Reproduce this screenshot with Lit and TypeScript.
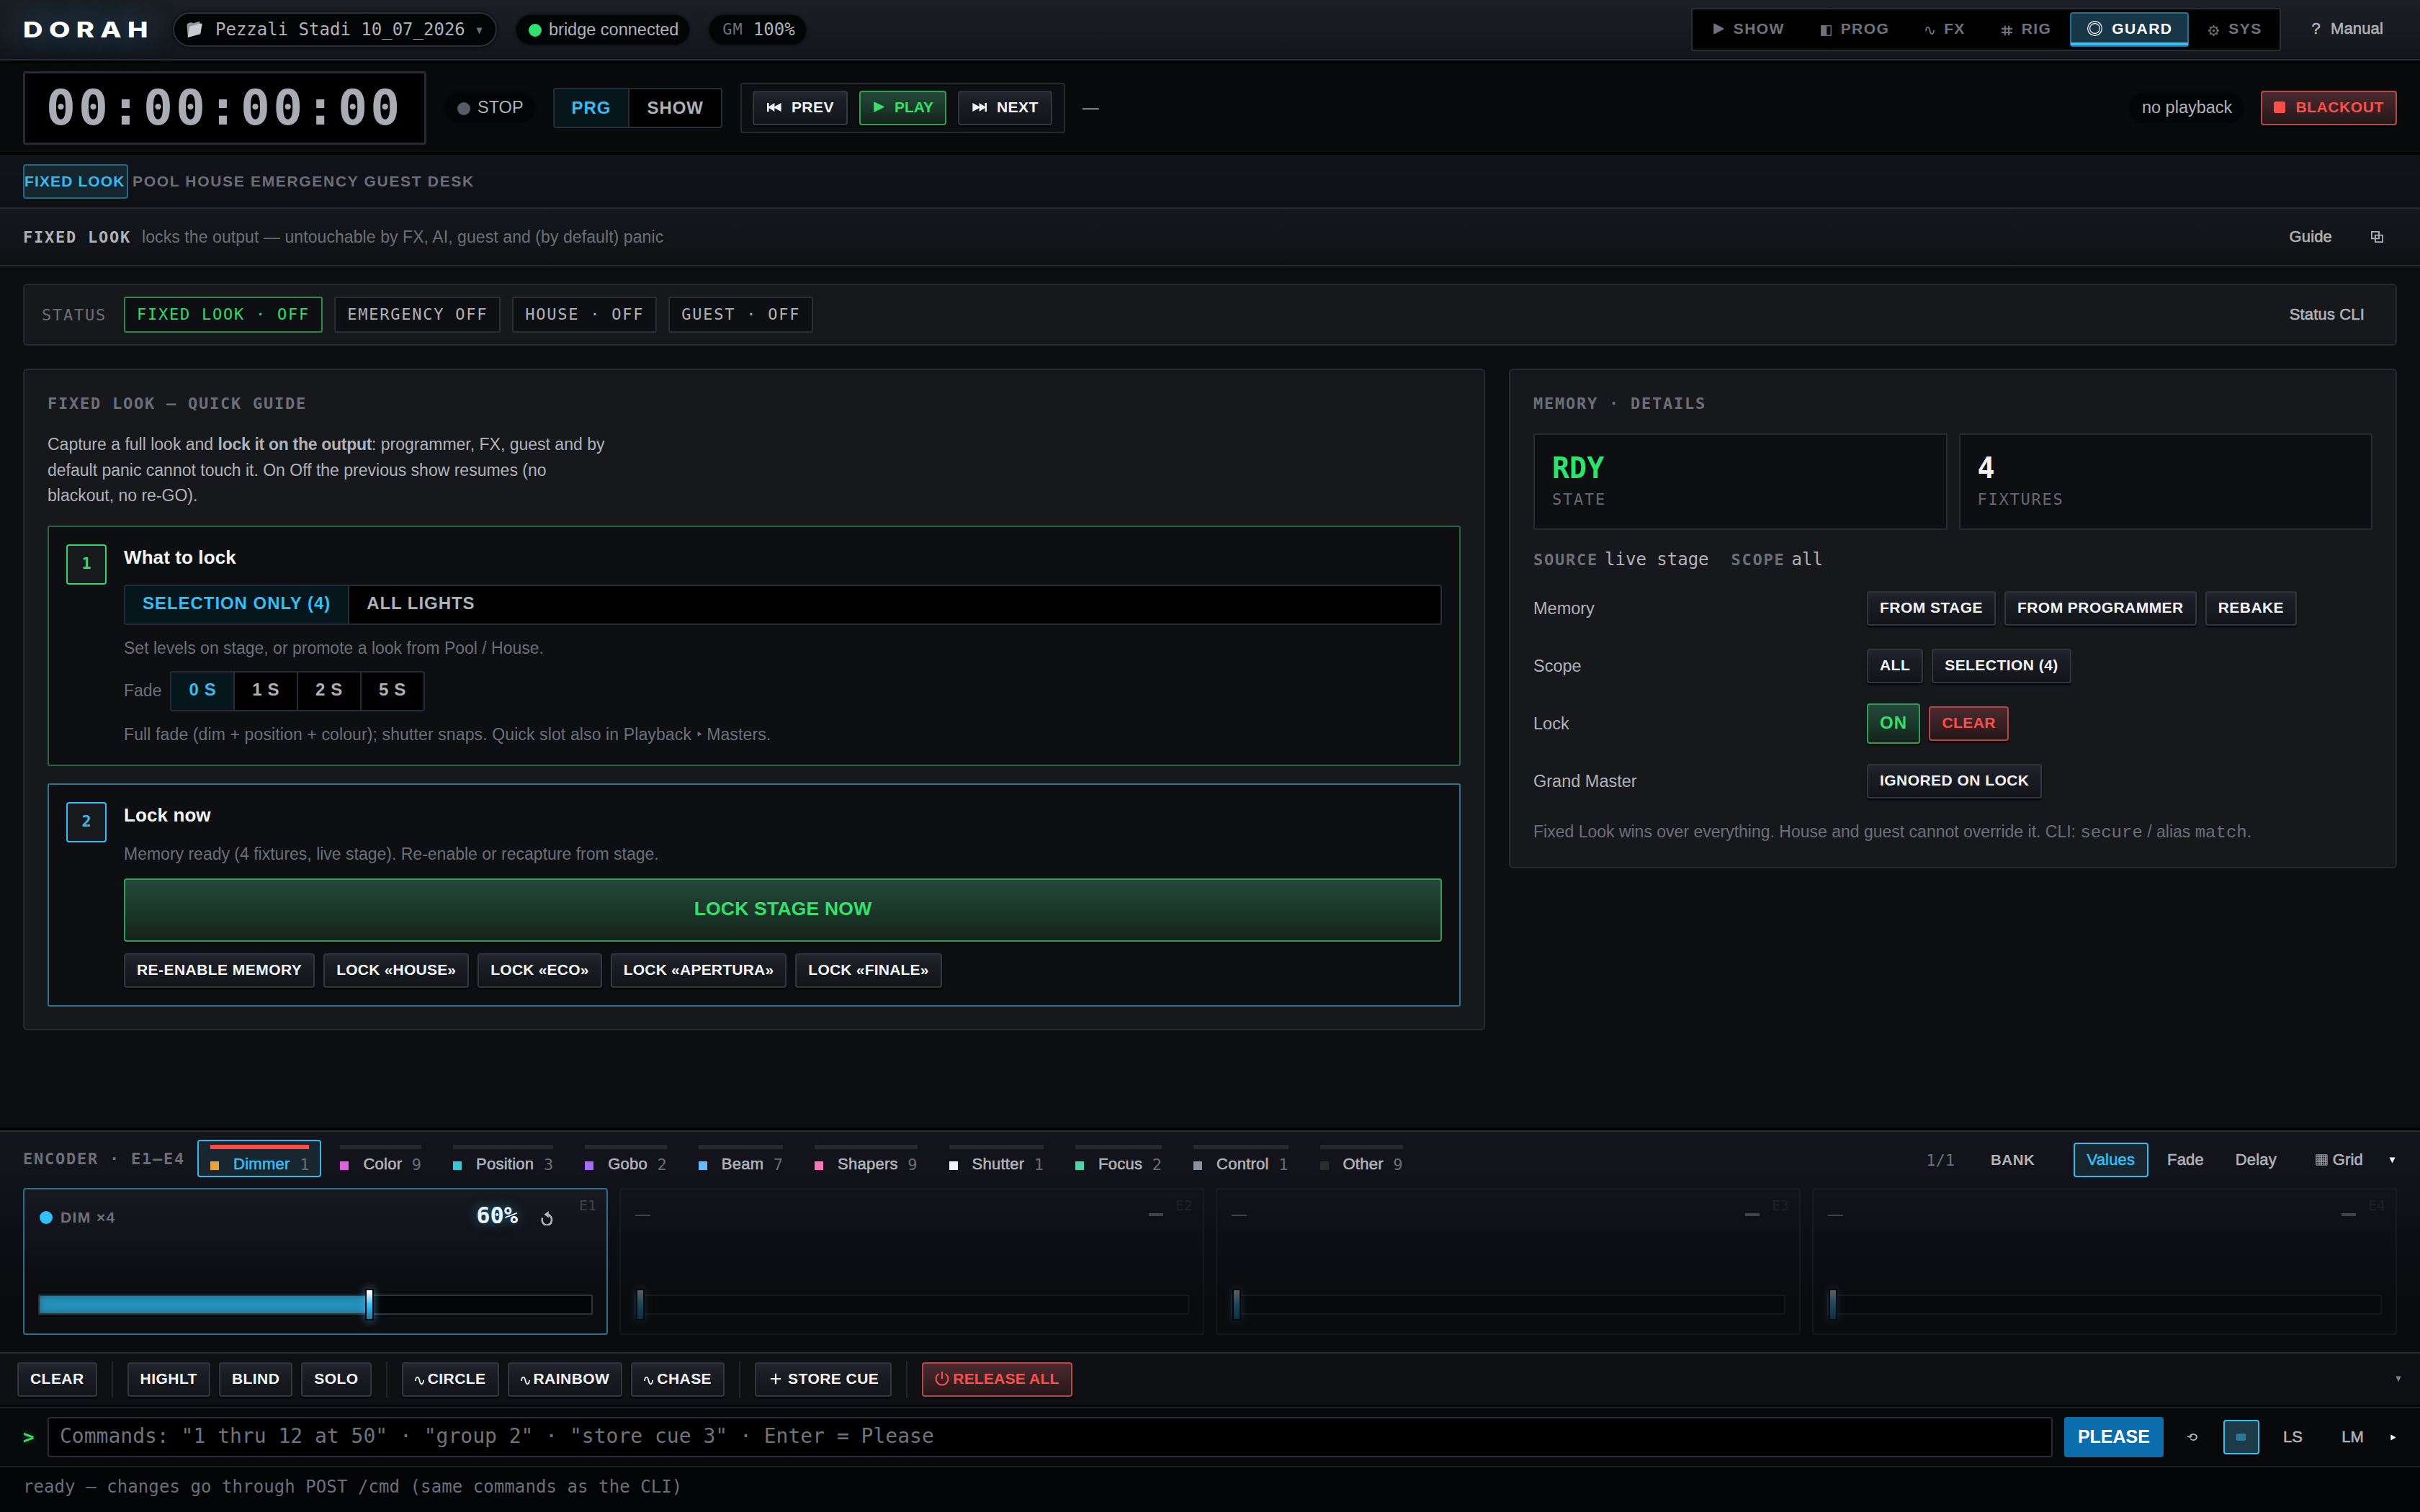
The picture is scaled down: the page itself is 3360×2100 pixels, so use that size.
import { LitElement, html, css, svg, TemplateResult } from "lit";
import { customElement, property } from "lit/decorators.js";
import { classMap } from "lit/directives/class-map.js";

// icon bodies, each drawn on a 20x20 grid
const ICONS: Record<string, TemplateResult> = {
  folder: svg`<path fill="#8f9499" d="M2 5 Q2 3 4 2.6 L7 1.6 L9 2.8 L15 .8 Q16.5 .6 16.5 2 L16.5 15 L3 19 Z"/><path fill="#c9cdd1" d="M5 6.4 L17.4 3 Q19 2.6 18.8 4.2 L17 15.2 L3 19.2 Z"/>`,
  play: svg`<path fill="currentColor" d="M1.5 2 Q1.5 .4 3 1 L18.4 8.8 Q20 10 18.4 11.2 L3 19 Q1.5 19.6 1.5 18 Z"/>`,
  prev: svg`<path fill="currentColor" d="M0 1.5 H2.6 V8.6 L10.4 1.5 V8.6 L19.6 1.5 V18.5 L10.4 11.4 V18.5 L2.6 11.4 V18.5 H0 Z"/>`,
  next: svg`<path fill="currentColor" d="M20 1.5 H17.4 V8.6 L9.6 1.5 V8.6 L.4 1.5 V18.5 L9.6 11.4 V18.5 L17.4 11.4 V18.5 H20 Z"/>`,
  stop: svg`<rect fill="currentColor" x="0" y="0" width="20" height="20" rx="3.5"/>`,
  half: svg`<rect x="1" y="1" width="18" height="18" fill="none" stroke="currentColor" stroke-width="1.8"/><rect fill="currentColor" x="1" y="1" width="10" height="18"/>`,
  wave: svg`<path fill="none" stroke="currentColor" stroke-width="2.8" d="M1.5 11 C2 1 8 0 10 10 C12 20 18 19 18.5 9"/>`,
  hash: svg`<path fill="none" stroke="currentColor" stroke-width="2.8" d="M6.5 1 V19 M13.5 1 V19 M0 6.5 H20 M0 13.5 H20"/>`,
  ring: svg`<circle cx="10" cy="10" r="9.4" fill="none" stroke="currentColor" stroke-width="1.1"/><circle cx="10" cy="10" r="6.6" fill="none" stroke="currentColor" stroke-width="1.1"/>`,
  gear: svg`<circle cx="10" cy="10" r="6.8" fill="none" stroke="currentColor" stroke-width="2.2"/><circle cx="10" cy="10" r="2.2" fill="currentColor"/><path stroke="currentColor" stroke-width="2.4" d="M10 0 V3 M10 17 V20 M0 10 H3 M17 10 H20 M3 3 L5 5 M15 15 L17 17 M17 3 L15 5 M5 15 L3 17"/>`,
  copy: svg`<path fill="none" stroke="currentColor" stroke-width="2.2" d="M1 1 H13 V13 H1 Z M7 7 H19 V19 H7 Z"/>`,
  undo: svg`<path fill="none" stroke="currentColor" stroke-width="2.8" d="M2.4 9.5 A7.4 7.4 0 1 0 10.5 5"/><path fill="currentColor" d="M12 0 V9.6 L5 4.8 Z"/>`,
  power: svg`<path fill="none" stroke="currentColor" stroke-width="2" d="M10 0 V10 M5.6 3 A8.4 8.4 0 1 0 14.4 3"/>`,
  plus: svg`<path fill="none" stroke="currentColor" stroke-width="2.8" d="M10 1 V19 M1 10 H19"/>`,
  grid: svg`<path fill="none" stroke="currentColor" stroke-width="1.1" d="M1 1 H19 V19 H1 Z M4 1 V19 M7 1 V19 M10 1 V19 M13 1 V19 M16 1 V19 M1 4 H19 M1 7 H19 M1 10 H19 M1 13 H19 M1 16 H19"/>`,
  loop: svg`<path fill="none" stroke="currentColor" stroke-width="2.8" d="M6 13.5 A6.8 6.8 0 1 0 6.6 5.6 L5.6 9 M0 8 L5.6 10.4 L9 6"/>`,
  keys: svg`<rect x="0.6" y="3" width="18.8" height="14" rx="2" fill="#226f8d" stroke="currentColor" stroke-width="1.4"/><path stroke="currentColor" stroke-width="1.4" stroke-dasharray="1.6 1" d="M2.5 6.5 H17.5 M2.5 10 H17.5 M2.5 13.5 H17.5"/>`,
  down: svg`<path fill="currentColor" d="M1 1 H19 L10 19 Z"/>`,
  right: svg`<path fill="currentColor" d="M1 1 V19 L19 10 Z"/>`,
};

const icon = (name: string, w: number, h = w) =>
  html`<svg class="i ${name}" width=${w} height=${h} viewBox="0 0 20 20" preserveAspectRatio="none">${ICONS[name]}</svg>`;

const shared = css`
  * {
    box-sizing: border-box;
  }
  .mono {
    font-family: "DejaVu Sans Mono", monospace;
  }
  .i {
    display: block;
    flex: none;
  }
  .grow {
    flex: 1;
  }
`;

@customElement("encoder-card")
export class EncoderCard extends LitElement {
  @property() label = "";
  @property() value = "";
  @property() slotName = "";
  @property({ type: Number }) level = 0;
  @property({ type: Boolean, reflect: true }) active = false;

  static styles = [
    shared,
    css`
      :host {
        display: block;
        flex: 1;
      }
      .card {
        position: relative;
        height: 204px;
        border: 2px solid #2f3138;
        border-radius: 4px;
        background: linear-gradient(#161a20, #11121a 35%, #0c0d10 70%);
        padding: 24px 20px 26px;
        display: flex;
        flex-direction: column;
        justify-content: space-between;
        opacity: 0.33;
      }
      :host([active]) .card {
        opacity: 1;
        border-color: #28708c;
      }
      .head {
        display: flex;
        align-items: center;
        height: 24px;
        padding-right: 35px;
        color: #6e717a;
        font: bold 21px "Liberation Sans", sans-serif;
        letter-spacing: 1.4px;
      }
      :host([active]) .head {
        padding-right: 52px;
      }
      .dot {
        width: 18px;
        height: 18px;
        border-radius: 50%;
        background: #30c0fa;
        margin: 6px 11px 0 1px;
      }
      .label {
        padding-top: 6px;
      }
      .value {
        color: #eaf6ff;
        font: bold 32px "DejaVu Sans Mono", monospace;
        letter-spacing: 0;
        text-shadow: 0 0 16px rgba(56, 192, 248, 0.5);
      }
      .head .i {
        color: #b3b5bb;
        margin: 7px 1px 0 32px;
      }
      .dash,
      .dashv {
        width: 21px;
        height: 2px;
        background: #a8abb2;
      }
      .dashv {
        width: 20px;
        height: 4px;
        margin-top: -2px;
      }
      .slot {
        position: absolute;
        top: 10px;
        right: 14px;
        color: #40434b;
        font-size: 20px;
      }
      .track {
        position: relative;
        height: 28px;
        margin: 0 -1px;
        border: 2px solid #2f3136;
        background: #040506;
      }
      .fill {
        height: 100%;
        background: #2690b8;
        box-shadow: inset 0 0 8px #146080;
      }
      .thumb {
        position: absolute;
        top: -10px;
        width: 12px;
        height: 44px;
        border: 2px solid #020406;
        background: linear-gradient(#fff 5%, #38c0f8 50%, #1b7ba4);
        box-shadow: 0 0 12px rgba(56, 192, 248, 0.6);
      }
    `,
  ];

  render() {
    return html`
      <div class="card">
        <div class="head">
          ${this.active
            ? html`<span class="dot"></span><span class="label">${this.label}</span>`
            : html`<span class="dash"></span>`}
          <span class="grow"></span>
          ${this.active
            ? html`<span class="value">${this.value}</span>${icon("undo", 18, 20)}`
            : html`<span class="dashv"></span>`}
        </div>
        <span class="slot mono">${this.slotName}</span>
        <div class="track">
          <div class="fill" style="width:${this.level}%"></div>
          <div class="thumb" style="left:calc((100% - 12px) * ${this.level / 100})"></div>
        </div>
      </div>
    `;
  }
}

@customElement("app-root")
export class AppRoot extends LitElement {
  nav = [
    { icon: "play", w: 16, label: "SHOW" },
    { icon: "half", w: 15, label: "PROG" },
    { icon: "wave", w: 13, label: "FX" },
    { icon: "hash", w: 15, label: "RIG" },
    { icon: "ring", w: 21, label: "GUARD" },
    { icon: "gear", w: 15, label: "SYS" },
  ];

  families = [
    { label: "Dimmer", count: 1, color: "#eaa23c" },
    { label: "Color", count: 9, color: "#df62dd" },
    { label: "Position", count: 3, color: "#38c6d6" },
    { label: "Gobo", count: 2, color: "#a26ef8" },
    { label: "Beam", count: 7, color: "#6cb8fb" },
    { label: "Shapers", count: 9, color: "#fb76b8" },
    { label: "Shutter", count: 1, color: "#f2f2f5" },
    { label: "Focus", count: 2, color: "#4bd6a8" },
    { label: "Control", count: 1, color: "#8b919d" },
    { label: "Other", count: 9, color: "#2b2c30" },
  ];

  static styles = [
    shared,
    css`
      :host {
        display: flex;
        flex-direction: column;
        width: 3360px;
        height: 2100px;
        overflow: hidden;
        background: #0c0e12;
        color: #b0b2b9;
        font-family: "Liberation Sans", Arial, sans-serif;
        font-size: 23px;
        white-space: nowrap;
      }
      .row {
        display: flex;
        align-items: center;
      }
      .dim {
        color: #6c6f79;
      }
      .top {
        height: 84px;
        flex: none;
        padding: 0 32px;
        border-bottom: 2px solid #292b31;
        background: linear-gradient(#1b1e23, #191c24 35%, #14151b);
      }
      .brand {
        width: 177px;
        margin: 0 31px 0 0;
        color: #fff;
        font: 800 30px Inter, sans-serif;
        letter-spacing: 6.6px;
        transform: scaleX(1.27);
        transform-origin: left;
        text-shadow: 0 0 36px rgba(56, 192, 248, 0.5);
      }
      .pill {
        display: flex;
        align-items: center;
        height: 41px;
        border-radius: 21px;
        background: #030405;
        padding: 0 15px 0 17px;
        font-size: 23.5px;
        box-shadow: 0 0 4px #030405;
      }
      .file {
        width: 450px;
        height: 48px;
        border: 2px solid #2d3037;
        border-radius: 24px;
        margin-right: 27px;
        padding: 0 15px;
        font-size: 24px;
      }
      .file .folder {
        margin-right: 17px;
      }
      .file .down {
        margin: 4px 0 0 15px;
        color: #6d7078;
      }
      .dot {
        width: 18px;
        height: 18px;
        border-radius: 50%;
        margin: 2px 10px 0 0;
        background: #565b68;
      }
      .dot.on {
        background: #2fe26c;
      }
      .gm {
        margin-left: 28px;
        padding: 0 15px 0 18px;
        font-size: 24px;
      }
      .gm .dim {
        font-size: 22px;
        margin: -2px 14px 0 0;
        letter-spacing: 1px;
      }
      .nav {
        gap: 3px;
        height: 60px;
        padding: 0 1px 0 4px;
        border: 2px solid #2b2d35;
        border-radius: 4px;
        background: #020203;
        margin-right: 43px;
      }
      .nav .item {
        position: relative;
        display: flex;
        align-items: center;
        gap: 13px;
        height: 48px;
        padding: 0 21px 3px 22px;
        border: 2px solid transparent;
        border-radius: 4px;
        color: #6f727d;
        font-weight: bold;
        font-size: 21px;
        letter-spacing: 1.4px;
      }
      .nav .half,
      .nav .wave,
      .nav .hash,
      .nav .gear {
        margin-top: 5px;
      }
      .nav .item.on {
        color: #fff;
        background: #173648;
        border-color: #267394;
      }
      .nav .item.on::after {
        content: "";
        position: absolute;
        left: -1px;
        right: -1px;
        bottom: 0;
        height: 4px;
        background: #35c3ff;
      }
      .med {
        font-size: 22px;
        letter-spacing: 0.15px;
        -webkit-text-stroke: 0.6px currentColor;
      }
      .manual {
        padding-right: 19px;
        gap: 14px;
        margin-top: -3px;
      }

      .transport {
        height: 131px;
        flex: none;
        padding: 0 32px;
        border-top: 4px solid #030304;
        border-bottom: 4px solid #020203;
        background: #090a0c;
      }
      .clock {
        width: 560px;
        height: 102px;
        border: 3px solid #292b33;
        border-radius: 4px;
        background: #000;
        color: #a9abb5;
        font: bold 68px/96px "DejaVu Sans Mono", monospace;
        letter-spacing: 4.08px;
        padding-left: 29px;
        margin-right: 26px;
      }
      .seg {
        display: inline-flex;
        height: 56px;
        border: 2px solid #2a2c33;
        border-radius: 4px;
        background: #020203;
        font-weight: bold;
        font-size: 24px;
        letter-spacing: 0.6px;
        line-height: 48px;
      }
      .seg > span {
        padding: 0 24px;
        border-right: 2px solid #2a2c33;
      }
      .seg > span:last-child {
        border-right: 0;
      }
      .seg .on {
        color: #35bdf5;
        background: #06161d;
      }
      .transport .seg {
        margin: 0 25px 0 26px;
        line-height: 51px;
        letter-spacing: 0.95px;
      }
      .btns {
        display: flex;
        align-items: center;
        gap: 12px;
      }
      .group {
        gap: 16px;
        height: 70px;
        padding: 0 16px 0 15px;
        border: 2px solid #25282e;
        border-radius: 4px;
        background: #0c0e11;
      }
      .btn {
        display: flex;
        align-items: center;
        justify-content: center;
        height: 48px;
        padding: 0 16px 2px;
        border: 2px solid #34373f;
        border-top-color: #30333b;
        border-radius: 4px;
        background: linear-gradient(#23262e, #1a1d24 30%, #121418);
        box-shadow: 0 2px 2px #020203;
        color: #f2f3f5;
        font-weight: bold;
        font-size: 21px;
        letter-spacing: 0.45px;
      }
      .btn .i {
        margin-right: 14px;
      }
      .group .btn {
        padding: 0 17px 2px 18px;
      }
      .btn.go {
        color: #35e06c;
        border-color: #2f9f58;
        background: linear-gradient(#25483a, #1c3a2c 45%, #14231b);
      }
      .group .go {
        padding: 0 16px 2px 17px;
        letter-spacing: 0;
      }
      .btn.stop {
        color: #fd4f49;
        border-color: #b8474a;
        background: linear-gradient(#4b292d, #3a2226 45%, #251618);
      }
      .transport .btn.stop {
        letter-spacing: 0.6px;
      }

      .tabs {
        height: 75px;
        flex: none;
        gap: 6px;
        padding: 0 32px;
        border-bottom: 2px solid #25282c;
        background: linear-gradient(#12121b, #11121a 35%, #0f1013);
        font-weight: bold;
        font-size: 21px;
        letter-spacing: 1.68px;
        color: #6c6f79;
      }
      .tabs .on {
        width: 146px;
        height: 48px;
        line-height: 43px;
        border: 2px solid #226a86;
        border-radius: 4px;
        background: #16262f;
        color: #38b9f0;
        letter-spacing: 1.12px;
      }
      .pagehead {
        height: 80px;
        flex: none;
        padding: 0 32px;
        border-bottom: 2px solid #2a2c30;
        background: linear-gradient(#15191d, #0f1013);
      }
      .pagehead b {
        font-size: 22px;
        letter-spacing: 1.76px;
        margin-right: 15px;
      }
      .pagehead .dim {
        letter-spacing: 0.08px;
      }
      .pagehead .copy {
        margin: 0 19px 0 54px;
      }

      .main {
        flex: 1;
        padding: 24px 32px 0;
      }
      .panel {
        border: 2px solid #282a2f;
        border-radius: 6px;
        background: #17181c;
      }
      .status {
        height: 86px;
        padding: 0 43px 0 24px;
        font-size: 22px;
        letter-spacing: 1.76px;
      }
      .status .btns {
        gap: 16px;
        margin-left: 24px;
      }
      .status .med {
        font-family: "Liberation Sans", sans-serif;
        letter-spacing: 0.15px;
      }
      .chip {
        height: 50px;
        line-height: 45px;
        padding: 0 16px;
        border: 2px solid #2b2d33;
        border-radius: 3px;
        background: #0d0f12;
      }
      .chip.on {
        color: #2fdc68;
        border-color: #278c4c;
      }
      .cols {
        display: flex;
        align-items: flex-start;
        gap: 33px;
        margin-top: 32px;
      }
      h2 {
        margin: 0;
        font: bold 22px/26px "DejaVu Sans Mono", monospace;
        letter-spacing: 1.76px;
        color: #6c6f79;
      }
      .guide {
        width: 2030px;
        height: 919px;
        padding: 34px 32px 0;
      }
      .guide > p {
        width: 790px;
        margin: 26px 0 23px;
        line-height: 35.6px;
        white-space: normal;
      }
      .guide > p b {
        letter-spacing: -0.3px;
      }
      .step {
        display: flex;
        gap: 24px;
        padding: 24px;
        border: 2px solid #26683f;
        border-radius: 3px;
        background: #0d0f12;
        height: 334px;
        margin-bottom: 24px;
      }
      .step.two {
        border-color: #2a7594;
        height: 310px;
      }
      .badge {
        flex: none;
        width: 56px;
        height: 56px;
        border: 2px solid #36d46c;
        border-radius: 4px;
        background: #17191d;
        color: #33d96a;
        font: bold 22px/50px "DejaVu Sans Mono", monospace;
        text-align: center;
      }
      .two .badge {
        color: #38bdf3;
        border-color: #38bdf3;
      }
      .body {
        flex: 1;
      }
      .body h3 {
        margin: 3px 0 23px;
        font-size: 26px;
        line-height: 30px;
        letter-spacing: 0.1px;
        color: #f4f5f7;
      }
      .body .seg {
        display: flex;
        letter-spacing: 0.95px;
      }
      .body p {
        margin: 0;
        line-height: 32px;
        color: #6c6f79;
      }
      .body p.levels {
        padding: 16px 0;
      }
      .body p.fade {
        padding-top: 16px;
        letter-spacing: 0.12px;
      }
      .body .row .seg {
        display: inline-flex;
        margin-left: 12px;
        color: #b0b2b9;
        letter-spacing: 0.6px;
      }
      .btn.big {
        height: 88px;
        font-size: 26.5px;
        margin: 18px 0 16px;
        letter-spacing: 0.2px;
      }
      .btn.look {
        letter-spacing: 0.22px;
      }
      .memory {
        flex: 1;
        height: 694px;
        padding: 34px 32px 0;
      }
      .stats {
        display: flex;
        gap: 16px;
        margin: 28px 0 23px;
      }
      .stat {
        flex: 1;
        height: 134px;
        padding: 21px 24px;
        border: 2px solid #292b30;
        border-radius: 2px;
        background: #0d0f12;
        font-size: 22px;
        line-height: 26px;
        letter-spacing: 1.76px;
        color: #666973;
      }
      .stat b {
        display: block;
        font-size: 40px;
        line-height: 50px;
        letter-spacing: 0;
        color: #f2f3f5;
        margin-bottom: 6px;
      }
      .stat b.ok {
        color: #2fe26c;
      }
      .source {
        height: 36px;
        font-size: 24px;
        margin-bottom: 22px;
      }
      .source b {
        font-size: 22px;
        letter-spacing: 1.76px;
        margin-right: 9px;
        color: #6c6f79;
      }
      .source span {
        margin-right: 31px;
      }
      .opt {
        display: grid;
        grid-template-columns: 463px 1fr;
        align-items: center;
        height: 56px;
        margin-bottom: 24px;
        font-size: 23.5px;
      }
      .btn.tall {
        height: 56px;
        font-size: 24px;
        letter-spacing: 1.2px;
      }
      .memory p {
        margin: 0;
        line-height: 36px;
        color: #6c6f79;
      }
      .memory code {
        font-family: "Liberation Mono", monospace;
        font-size: 24px;
      }

      .encoders {
        height: 314px;
        flex: none;
        border-top: 4px solid #000;
        border-bottom: 2px solid #26282d;
        background: #0a0b0e;
      }
      .enc {
        height: 308px;
        border-top: 2px solid #2b2c35;
        background: linear-gradient(#14151b, #12121b 20%, #0a0b0e 75%);
        padding: 0 32px;
      }
      .enchead {
        height: 78px;
      }
      .enchead h2 {
        margin: -2px 17px 0 0;
      }
      .fam {
        display: flex;
        flex-direction: column;
        justify-content: center;
        gap: 8px;
        height: 52px;
        margin: -4px 8px 0 0;
        padding: 2px 16px 0;
        border: 2px solid transparent;
        border-radius: 4px;
      }
      .fam .bar {
        height: 6px;
        background: #28292e;
      }
      .fam .row {
        height: 26px;
      }
      .fam .med {
        letter-spacing: 0.26px;
      }
      .fam i {
        width: 12px;
        height: 12px;
        margin: 3px 20px 0 0;
      }
      .fam .count {
        font-size: 22px;
        margin-left: 13.5px;
        color: #6a6d77;
      }
      .fam.on {
        border-color: #34b8ee;
        background: #18272f;
        color: #38bdf3;
        padding: 2px 15px 0 16px;
      }
      .fam.on .bar {
        background: #fd4b45;
      }
      .enchead .page {
        font-size: 22px;
        margin-right: 50px;
      }
      .enchead b {
        font-size: 20.5px;
        letter-spacing: 0.6px;
        margin-right: 53px;
      }
      .mode {
        display: flex;
        align-items: center;
        height: 48px;
        padding: 0 16px;
        border: 2px solid transparent;
        border-radius: 4px;
        margin-right: 8px;
      }
      .mode.on {
        color: #38bdf3;
        border-color: #34b8ee;
        background: #18272f;
        padding: 0 17px;
      }
      .mode .i {
        margin: 0 7px 0 10px;
      }
      .enchead > .down {
        margin: 0 2px 0 10px;
        color: #fff;
      }
      .cards {
        display: flex;
        gap: 16px;
      }

      .deck {
        height: 74px;
        flex: none;
        padding: 0 26px 0 24px;
        border-bottom: 3px solid #040506;
        background: #0e1013;
        color: #80838b;
      }
      .deck .btn .i {
        margin-right: 5px;
      }
      .deck .btn .wave {
        margin-top: 6px;
      }
      .deck .btn .plus {
        margin: 0 9px 0 3px;
      }
      .deck .btn.stop {
        letter-spacing: 0.2px;
      }
      .sep {
        width: 2px;
        height: 50px;
        margin: 0 8px;
        background: #24262b;
      }
      .cmd {
        height: 84px;
        flex: none;
        padding: 0 32px;
        border-top: 2px solid #1e2024;
        border-bottom: 2px solid #1e2024;
        background: #08090b;
      }
      .prompt {
        width: 34px;
        color: #35da6a;
        font-size: 26px;
        font-weight: bold;
        text-shadow: 0 0 8px rgba(47, 226, 108, 0.4);
      }
      .input {
        flex: 1;
        height: 56px;
        border: 2px solid #2a2c33;
        border-radius: 4px;
        background: #000;
        color: #70737e;
        font-size: 28px;
        line-height: 50px;
        padding-left: 15px;
      }
      .please {
        width: 138px;
        height: 56px;
        margin: 0 33px 0 16px;
        border-radius: 4px;
        background: #0b6dab;
        color: #fff;
        font-size: 25px;
        font-weight: bold;
        line-height: 54px;
        text-align: center;
      }
      .sq {
        display: flex;
        align-items: center;
        justify-content: center;
        width: 50px;
        height: 48px;
        margin: 0 33px 0 36px;
        border: 2px solid #38bdf3;
        border-radius: 4px;
        background: #1d3a48;
        color: #2f9bc4;
      }
      .ls {
        margin-right: 54px;
      }
      .cmd > .right {
        margin: 0 1px 0 37px;
        color: #fff;
      }
      .foot {
        height: 62px;
        flex: none;
        padding: 0 32px;
        background: #030405;
        color: #6c6f79;
        font-size: 24px;
        letter-spacing: 0.08px;
        line-height: 55px;
      }
    `,
  ];

  button(label: string, cls = "", glyph: unknown = "") {
    return html`<div class="btn ${cls}">${glyph}${label}</div>`;
  }

  renderTop() {
    return html`
      <header class="top row">
        <div class="brand">DORAH</div>
        <div class="pill file mono">${icon("folder", 25, 24)}Pezzali Stadi 10_07_2026${icon("down", 9, 10)}</div>
        <div class="pill"><span class="dot on"></span>bridge connected</div>
        <div class="pill gm mono"><span class="dim">GM</span>100%</div>
        <span class="grow"></span>
        <nav class="nav row">
          ${this.nav.map(
            (n) => html`<div class=${classMap({ item: true, on: n.label === "GUARD" })}>${icon(n.icon, n.w)}${n.label}</div>`
          )}
        </nav>
        <div class="manual row med"><span>?</span><span>Manual</span></div>
      </header>
    `;
  }

  renderTransport() {
    return html`
      <section class="transport row">
        <div class="clock">00:00:00:00</div>
        <div class="pill"><span class="dot"></span>STOP</div>
        <div class="seg"><span class="on">PRG</span><span>SHOW</span></div>
        <div class="group btns">
          ${this.button("PREV", "", icon("prev", 20, 14))}
          ${this.button("PLAY", "go", icon("play", 16, 15))}
          ${this.button("NEXT", "", icon("next", 20, 14))}
        </div>
        <span style="margin-left:24px">—</span>
        <span class="grow"></span>
        <div class="pill" style="margin-right:25px">no playback</div>
        ${this.button("BLACKOUT", "stop", icon("stop", 16))}
      </section>
    `;
  }

  renderGuide() {
    return html`
      <section class="panel guide">
        <h2>FIXED LOOK — QUICK GUIDE</h2>
        <p>
          Capture a full look and <b>lock it on the output</b>: programmer, FX, guest and by default panic cannot touch
          it. On Off the previous show resumes (no blackout, no re-GO).
        </p>
        <div class="step">
          <div class="badge">1</div>
          <div class="body">
            <h3>What to lock</h3>
            <div class="seg"><span class="on">SELECTION ONLY (4)</span><span>ALL LIGHTS</span></div>
            <p class="levels">Set levels on stage, or promote a look from Pool / House.</p>
            <div class="row dim">
              Fade
              <div class="seg">
                <span class="on">0 S</span><span>1 S</span><span>2 S</span><span>5 S</span>
              </div>
            </div>
            <p class="fade">
              Full fade (dim + position + colour); shutter snaps. Quick slot also in Playback ‣ Masters.
            </p>
          </div>
        </div>
        <div class="step two">
          <div class="badge">2</div>
          <div class="body">
            <h3>Lock now</h3>
            <p>Memory ready (4 fixtures, live stage). Re-enable or recapture from stage.</p>
            ${this.button("LOCK STAGE NOW", "go big")}
            <div class="btns">
              ${this.button("RE-ENABLE MEMORY")}
              ${["HOUSE", "ECO", "APERTURA", "FINALE"].map((l) => this.button(`LOCK «${l}»`, "look"))}
            </div>
          </div>
        </div>
      </section>
    `;
  }

  renderMemory() {
    return html`
      <section class="panel memory">
        <h2>MEMORY · DETAILS</h2>
        <div class="stats mono">
          <div class="stat"><b class="ok">RDY</b>STATE</div>
          <div class="stat"><b>4</b>FIXTURES</div>
        </div>
        <div class="source row mono"><b>SOURCE</b><span>live stage</span><b>SCOPE</b><span>all</span></div>
        <div class="opt">
          Memory
          <div class="btns">${["FROM STAGE", "FROM PROGRAMMER", "REBAKE"].map((l) => this.button(l))}</div>
        </div>
        <div class="opt">
          Scope
          <div class="btns">${["ALL", "SELECTION (4)"].map((l) => this.button(l))}</div>
        </div>
        <div class="opt">
          Lock
          <div class="btns">${this.button("ON", "go tall")}${this.button("CLEAR", "stop")}</div>
        </div>
        <div class="opt">
          Grand Master
          <div class="btns">${this.button("IGNORED ON LOCK")}</div>
        </div>
        <p>
          Fixed Look wins over everything. House and guest cannot override it. CLI: <code>secure</code> / alias
          <code>match</code>.
        </p>
      </section>
    `;
  }

  renderEncoders() {
    return html`
      <section class="encoders">
        <div class="enc">
          <div class="enchead row">
            <h2>ENCODER · E1–E4</h2>
            ${this.families.map(
              (f, i) => html`
                <div class=${classMap({ fam: true, on: i === 0 })}>
                  <div class="bar"></div>
                  <div class="row">
                    <i style="background:${f.color}"></i><span class="med">${f.label}</span
                    ><span class="count mono">${f.count}</span>
                  </div>
                </div>
              `
            )}
            <span class="grow"></span>
            <span class="page mono dim">1/1</span>
            <b>BANK</b>
            <div class="mode med on">Values</div>
            <div class="mode med">Fade</div>
            <div class="mode med">Delay</div>
            <div class="mode med">${icon("grid", 17, 16)}Grid</div>
            ${icon("down", 9)}
          </div>
          <div class="cards">
            <encoder-card active label="DIM ×4" value="60%" level="60" slotName="E1"></encoder-card>
            <encoder-card slotName="E2"></encoder-card>
            <encoder-card slotName="E3"></encoder-card>
            <encoder-card slotName="E4"></encoder-card>
          </div>
        </div>
      </section>
    `;
  }

  renderDeck() {
    const sep = html`<span class="sep"></span>`;
    return html`
      <section class="deck row">
        <div class="btns">
          ${this.button("CLEAR")} ${sep} ${this.button("HIGHLT")} ${this.button("BLIND")} ${this.button("SOLO")} ${sep}
          ${["CIRCLE", "RAINBOW", "CHASE"].map((l) => this.button(l, "", icon("wave", 13)))} ${sep}
          ${this.button("STORE CUE", "", icon("plus", 16))} ${sep}
          ${this.button("RELEASE ALL", "stop", icon("power", 20))}
        </div>
        <span class="grow"></span>
        ${icon("down", 8, 9)}
      </section>
      <section class="cmd row">
        <span class="prompt mono">&gt;</span>
        <div class="input mono">Commands: "1 thru 12 at 50" · "group 2" · "store cue 3" · Enter = Please</div>
        <div class="please">PLEASE</div>
        ${icon("loop", 14, 12)}
        <div class="sq">${icon("keys", 13, 12)}</div>
        <span class="med ls">LS</span>
        <span class="med">LM</span>
        ${icon("right", 8, 9)}
      </section>
    `;
  }

  render() {
    return html`
      ${this.renderTop()} ${this.renderTransport()}
      <div class="tabs row"><span class="on">FIXED LOOK</span><span>POOL HOUSE EMERGENCY GUEST DESK</span></div>
      <div class="pagehead row">
        <b class="mono">FIXED LOOK</b>
        <span class="dim">locks the output — untouchable by FX, AI, guest and (by default) panic</span>
        <span class="grow"></span>
        <span class="med">Guide</span>
        ${icon("copy", 17, 16)}
      </div>
      <main class="main">
        <div class="panel status row mono">
          <span class="dim">STATUS</span>
          <div class="btns">
            <span class="chip on">FIXED LOOK · OFF</span>
            <span class="chip">EMERGENCY OFF</span>
            <span class="chip">HOUSE · OFF</span>
            <span class="chip">GUEST · OFF</span>
          </div>
          <span class="grow"></span>
          <span class="med">Status CLI</span>
        </div>
        <div class="cols">${this.renderGuide()} ${this.renderMemory()}</div>
      </main>
      ${this.renderEncoders()} ${this.renderDeck()}
      <footer class="foot mono">ready — changes go through POST /cmd (same commands as the CLI)</footer>
    `;
  }
}
